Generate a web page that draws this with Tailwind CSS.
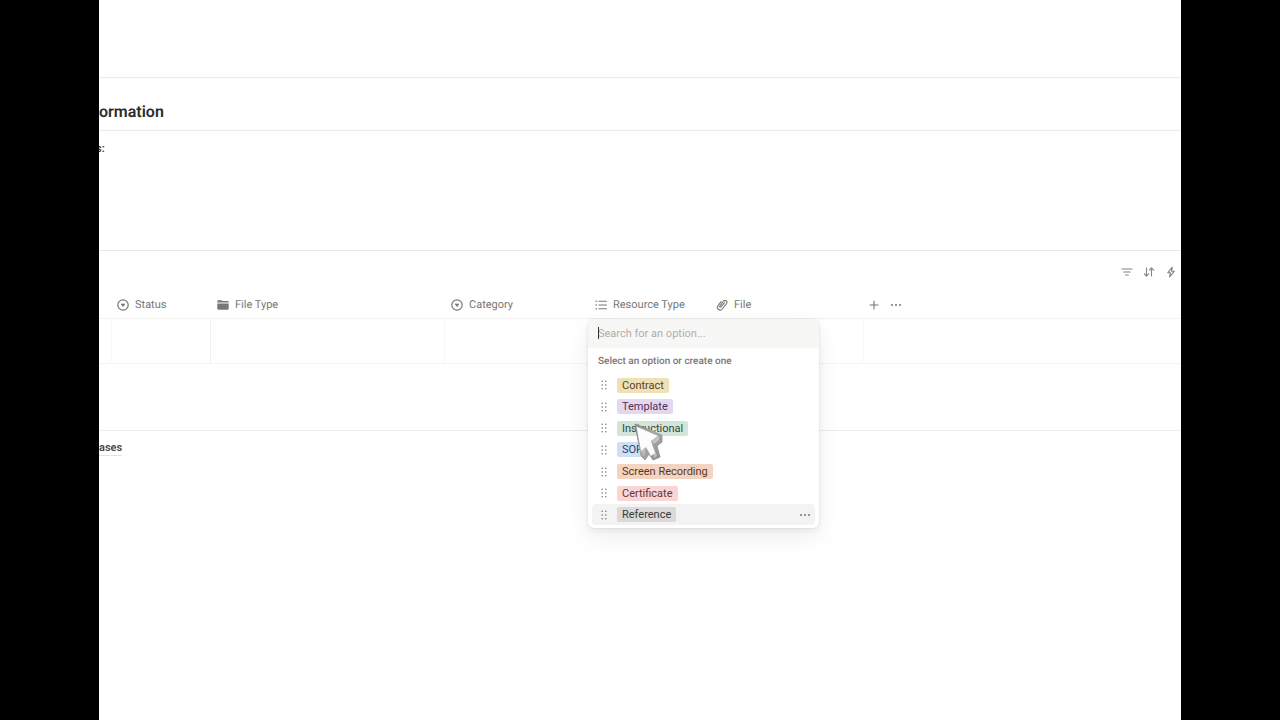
<!DOCTYPE html>
<html lang="en">
<head>
    <meta charset="UTF-8">
    <meta name="viewport" content="width=device-width, initial-scale=1.0">
    <title>Resource Databases</title>
    <script src="https://cdn.jsdelivr.net/npm/@tailwindcss/browser@4"></script>
</head>
<body class="bg-black min-h-screen flex px-[99px] font-[Roboto,sans-serif] text-[11px] text-[#787774] overflow-hidden [text-rendering:geometricPrecision]">

    <!-- Shared icons -->
    <svg class="hidden">
        <symbol id="select" viewBox="0 0 12 12">
            <circle cx="6" cy="6" r="5.2" fill="none" stroke="currentColor" stroke-width="1.2"/>
            <path d="M4 4.9h4L6 7.7z" fill="currentColor" stroke="currentColor" stroke-width=".5" stroke-linejoin="round"/>
        </symbol>
        <symbol id="grip" viewBox="0 0 6 10">
            <g fill="currentColor">
                <circle cx="1.2" cy="1.2" r=".8"/><circle cx="4.8" cy="1.2" r=".8"/>
                <circle cx="1.2" cy="5" r=".8"/><circle cx="4.8" cy="5" r=".8"/>
                <circle cx="1.2" cy="8.8" r=".8"/><circle cx="4.8" cy="8.8" r=".8"/>
            </g>
        </symbol>
        <symbol id="dots" viewBox="0 0 12 12">
            <g fill="currentColor"><circle cx="2" cy="6" r="1"/><circle cx="6" cy="6" r="1"/><circle cx="10" cy="6" r="1"/></g>
        </symbol>
    </svg>

    <main class="flex-1 min-w-0 min-h-screen bg-white overflow-hidden">
        <div class="h-[77px]"></div>

        <section class="border-y border-[#ebebea] h-[54px] pt-[22px]">
            <h1 class="text-base leading-6 font-semibold text-[#2c2c2b]">ormation</h1>
        </section>

        <section class="h-[119px] pt-[10px]">
            <p class="-ml-[3px] leading-4 font-semibold text-[#373530]">s:</p>
        </section>

        <!-- View toolbar -->
        <div class="border-t border-[#e9e9e8] h-[42px] pt-px flex items-center justify-end gap-[10px] pr-1 text-[#85837f]">
            <button aria-label="Filter"><svg class="size-3" viewBox="0 0 12 12" fill="none" stroke="currentColor" stroke-width="1.1" stroke-linecap="round"><path d="M1 3h10M2.8 6h6.4M4.6 9h2.8"/></svg></button>
            <button aria-label="Sort"><svg class="size-3" viewBox="0 0 12 12" fill="none" stroke="currentColor" stroke-width="1.1" stroke-linecap="round" stroke-linejoin="round"><path d="M3.5 2v8M1.3 7.9l2.2 2.2 2.2-2.2M8.5 10V2M6.3 4.1l2.2-2.2 2.2 2.2"/></svg></button>
            <button aria-label="Automations"><svg class="size-3" viewBox="0 0 12 12" fill="none" stroke="currentColor" stroke-width="1.1" stroke-linejoin="round"><path d="M7.3 1.2 2.8 6.7h2.6l-.8 4.1 4.6-5.5H6.5z"/></svg></button>
        </div>

        <table class="w-full table-fixed border-collapse">
            <colgroup>
                <col class="w-3"><col class="w-[99px]"><col class="w-[234px]"><col class="w-[144px]"><col class="w-[121px]"><col class="w-[154px]"><col>
            </colgroup>
            <thead>
                <tr class="h-[26px] text-left border-b border-[#f2f2f1]">
                    <th></th>
                    <th class="font-normal pl-[6px]"><span class="flex items-center gap-[6px]"><svg class="size-3"><use href="#select"/></svg>Status</span></th>
                    <th class="font-normal pl-[7px]"><span class="flex items-center gap-[6px]"><svg class="size-3" viewBox="0 0 12 12" fill="currentColor"><path d="M.3 2.3c0-.7.4-1.1 1-1.1h2.6c.4 0 .7.1 1 .4l.6.5h5.2c.6 0 1 .4 1 1v.4H.3z"/><path d="M.3 4.4h11.4v5.2c0 .7-.5 1.2-1.2 1.2h-9c-.7 0-1.2-.5-1.2-1.2z"/></svg>File Type</span></th>
                    <th class="font-normal pl-[7px]"><span class="flex items-center gap-[6px]"><svg class="size-3"><use href="#select"/></svg>Category</span></th>
                    <th class="font-normal pl-[7px]"><span class="flex items-center gap-[6px] whitespace-nowrap"><svg class="size-3" viewBox="0 0 12 12" fill="none" stroke="currentColor" stroke-width="1.1" stroke-linecap="round"><path d="M4 2.2h7.4M4 6h7.4M4 9.8h7.4"/><path d="M1.2 2.2h.1M1.2 6h.1M1.2 9.8h.1" stroke-width="1.6"/></svg>Resource Type</span></th>
                    <th class="font-normal pl-[7px]"><span class="flex items-center gap-[6px]"><svg class="size-3" viewBox="0 0 12 12" fill="none" stroke="currentColor" stroke-width="1.1" stroke-linecap="round" stroke-linejoin="round"><path d="M8.3 3.8 5 8c-.6.8-1.7-.1-1.1-.9L7.3 2.3C8.9.1 12.1 2.3 10.5 4.6L6.2 10C4 12.6-.2 9.8 1.9 6.9L5.1 2.7"/></svg>File</span></th>
                    <th class="pl-[5px]"><span class="flex items-center gap-[10px]">
                        <button aria-label="Add property"><svg class="size-3" viewBox="0 0 12 12" stroke="currentColor" stroke-width="1.1" stroke-linecap="round"><path d="M6 2v8M2 6h8"/></svg></button>
                        <button aria-label="More properties"><svg class="size-3"><use href="#dots"/></svg></button>
                    </span></th>
                </tr>
            </thead>
            <tbody>
                <tr class="h-[45px] border-b border-[#f4f4f3]">
                    <td class="border-r border-[#f7f7f6]"></td>
                    <td class="border-r border-[#f1f1f0]"></td>
                    <td class="border-r border-[#f7f7f6]"></td>
                    <td></td>
                    <td class="relative">
                        <!-- Option picker -->
                        <div class="absolute z-10 top-0 left-0 w-[231px] bg-white rounded-md overflow-hidden shadow-[0_0_0_1px_rgba(15,15,15,0.03),0_3px_6px_rgba(15,15,15,0.05),0_9px_24px_rgba(15,15,15,0.07)]">
                            <div class="relative h-[29px] bg-[#f7f7f5]">
                                <input type="text" aria-label="Search for an option" placeholder="Search for an option..." class="w-full h-full pl-[10px] outline-none [text-rendering:geometricPrecision] placeholder:text-[#b0afac]">
                                <span class="absolute left-[10px] top-2 w-px h-3 bg-[#37352f]"></span>
                            </div>
                            <p class="h-[27px] pl-[10px] flex items-center text-[10px] font-medium">Select an option or create one</p>
                            <ul class="grid grid-rows-7 h-[151px] mx-1 mb-[2px]">
                                <li class="flex items-center px-[9px] gap-[10px]"><svg class="w-[6px] h-[10px]"><use href="#grip"/></svg><button class="rounded-xs px-[5px] leading-[15px] bg-[#f1dfb6] text-[#57452a]">Contract</button></li>
                                <li class="flex items-center px-[9px] gap-[10px]"><svg class="w-[6px] h-[10px]"><use href="#grip"/></svg><button class="rounded-xs px-[5px] leading-[15px] bg-[#e5d7ee] text-[#4b3159]">Template</button></li>
                                <li class="flex items-center px-[9px] gap-[10px]"><svg class="w-[6px] h-[10px]"><use href="#grip"/></svg><button class="rounded-xs px-[5px] leading-[15px] bg-[#d3e4d9] text-[#2f4a3d]">Instructional</button></li>
                                <li class="flex items-center px-[9px] gap-[10px]"><svg class="w-[6px] h-[10px]"><use href="#grip"/></svg><button class="rounded-xs px-[5px] leading-[15px] bg-[#cfe0f5] text-[#2b4668]">SOP</button></li>
                                <li class="flex items-center px-[9px] gap-[10px]"><svg class="w-[6px] h-[10px]"><use href="#grip"/></svg><button class="rounded-xs px-[5px] leading-[15px] bg-[#f2d4c0] text-[#5c3723]">Screen Recording</button></li>
                                <li class="flex items-center px-[9px] gap-[10px]"><svg class="w-[6px] h-[10px]"><use href="#grip"/></svg><button class="rounded-xs px-[5px] leading-[15px] bg-[#f9d5d5] text-[#69352f]">Certificate</button></li>
                                <li class="flex items-center px-[9px] gap-[10px] rounded-sm bg-[#f3f3f3]"><svg class="w-[6px] h-[10px]"><use href="#grip"/></svg><button class="rounded-xs px-[5px] leading-[15px] bg-[#dadad9] text-[#3d3c39]">Reference</button><button class="ml-auto -mr-[5px]" aria-label="Edit option"><svg class="size-3"><use href="#dots"/></svg></button></li>
                            </ul>
                        </div>
                    </td>
                    <td class="border-r border-[#f7f7f6]"></td>
                    <td></td>
                </tr>
            </tbody>
        </table>

        <section class="mt-[66px] border-t border-[#ececeb] pt-[10px]">
            <a href="#" class="block w-fit leading-[14px] border-b border-[#e3e2e0] font-semibold text-[#4a4945]">ases</a>
        </section>
    </main>

    <!-- Pointer -->
    <svg class="absolute z-20 left-[632px] top-[422px] w-8 h-10" viewBox="0 0 32 40" aria-hidden="true">
        <defs>
            <linearGradient id="metal" x1="0" y1="0" x2="1" y2="1">
                <stop offset="0" stop-color="#8a8a8a"/><stop offset=".5" stop-color="#a8a8a8"/><stop offset="1" stop-color="#8c8c8c"/>
            </linearGradient>
        </defs>
        <path d="M3 2 30 13v7l-5 4 3 11-7 3-4-6-4 6-4-4z" fill="url(#metal)" stroke="url(#metal)" stroke-linejoin="round"/>
        <path d="m20 19 7-5v4l-5 4z" fill="#c4c4c4"/>
        <path d="m21 24 4 10-3 2z" fill="#c0c0c0"/>
        <path d="m9 29 5-4-2 10z" fill="#bdbdbd"/>
        <path d="M4.500 4.500 26 14l-7 5 4 12-4 3-5-9-5 4z" fill="#fcfcfc"/>
    </svg>
</body>
</html>
